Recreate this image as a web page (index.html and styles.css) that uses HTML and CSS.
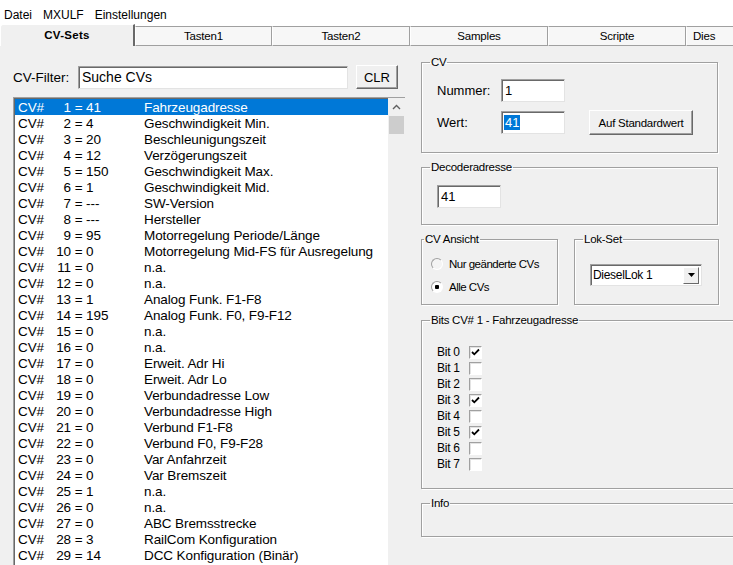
FILE: index.html
```html
<!DOCTYPE html>
<html lang="de">
<head>
  <meta charset="UTF-8">
  <title>MXULF - CV-Sets</title>
  <link rel="stylesheet" href="styles.css">
</head>
<body>
  <div class="window">
    <div class="menubar">
      <span class="menu-item">Datei</span>
      <span class="menu-item">MXULF</span>
      <span class="menu-item">Einstellungen</span>
    </div>

    <div class="tabs">
      <div class="tab active">CV-Sets</div>
      <div class="tab t1">Tasten1</div>
      <div class="tab t2">Tasten2</div>
      <div class="tab t3">Samples</div>
      <div class="tab t4">Scripte</div>
      <div class="tab t5">Dies</div>
    </div>

    <div class="page">
      <div class="left-col">
        <div class="filter-row">
          <label class="filter-label" for="filter">CV-Filter:</label>
          <div class="textbox filter-input" id="filter">Suche CVs</div>
          <div class="btn clr-btn">CLR</div>
        </div>

        <div class="listbox">
          <div class="rows">
            <div class="row selected"><span class="c-cv">CV#</span><span class="c-num">1</span><span class="c-val">&nbsp;= 41</span><span class="c-desc">Fahrzeugadresse</span></div>
            <div class="row"><span class="c-cv">CV#</span><span class="c-num">2</span><span class="c-val">&nbsp;= 4</span><span class="c-desc">Geschwindigkeit Min.</span></div>
            <div class="row"><span class="c-cv">CV#</span><span class="c-num">3</span><span class="c-val">&nbsp;= 20</span><span class="c-desc">Beschleunigungszeit</span></div>
            <div class="row"><span class="c-cv">CV#</span><span class="c-num">4</span><span class="c-val">&nbsp;= 12</span><span class="c-desc">Verzögerungszeit</span></div>
            <div class="row"><span class="c-cv">CV#</span><span class="c-num">5</span><span class="c-val">&nbsp;= 150</span><span class="c-desc">Geschwindigkeit Max.</span></div>
            <div class="row"><span class="c-cv">CV#</span><span class="c-num">6</span><span class="c-val">&nbsp;= 1</span><span class="c-desc">Geschwindigkeit Mid.</span></div>
            <div class="row"><span class="c-cv">CV#</span><span class="c-num">7</span><span class="c-val">&nbsp;= ---</span><span class="c-desc">SW-Version</span></div>
            <div class="row"><span class="c-cv">CV#</span><span class="c-num">8</span><span class="c-val">&nbsp;= ---</span><span class="c-desc">Hersteller</span></div>
            <div class="row"><span class="c-cv">CV#</span><span class="c-num">9</span><span class="c-val">&nbsp;= 95</span><span class="c-desc">Motorregelung Periode/Länge</span></div>
            <div class="row"><span class="c-cv">CV#</span><span class="c-num">10</span><span class="c-val">&nbsp;= 0</span><span class="c-desc">Motorregelung Mid-FS für Ausregelung</span></div>
            <div class="row"><span class="c-cv">CV#</span><span class="c-num">11</span><span class="c-val">&nbsp;= 0</span><span class="c-desc">n.a.</span></div>
            <div class="row"><span class="c-cv">CV#</span><span class="c-num">12</span><span class="c-val">&nbsp;= 0</span><span class="c-desc">n.a.</span></div>
            <div class="row"><span class="c-cv">CV#</span><span class="c-num">13</span><span class="c-val">&nbsp;= 1</span><span class="c-desc">Analog Funk. F1-F8</span></div>
            <div class="row"><span class="c-cv">CV#</span><span class="c-num">14</span><span class="c-val">&nbsp;= 195</span><span class="c-desc">Analog Funk. F0, F9-F12</span></div>
            <div class="row"><span class="c-cv">CV#</span><span class="c-num">15</span><span class="c-val">&nbsp;= 0</span><span class="c-desc">n.a.</span></div>
            <div class="row"><span class="c-cv">CV#</span><span class="c-num">16</span><span class="c-val">&nbsp;= 0</span><span class="c-desc">n.a.</span></div>
            <div class="row"><span class="c-cv">CV#</span><span class="c-num">17</span><span class="c-val">&nbsp;= 0</span><span class="c-desc">Erweit. Adr Hi</span></div>
            <div class="row"><span class="c-cv">CV#</span><span class="c-num">18</span><span class="c-val">&nbsp;= 0</span><span class="c-desc">Erweit. Adr Lo</span></div>
            <div class="row"><span class="c-cv">CV#</span><span class="c-num">19</span><span class="c-val">&nbsp;= 0</span><span class="c-desc">Verbundadresse Low</span></div>
            <div class="row"><span class="c-cv">CV#</span><span class="c-num">20</span><span class="c-val">&nbsp;= 0</span><span class="c-desc">Verbundadresse High</span></div>
            <div class="row"><span class="c-cv">CV#</span><span class="c-num">21</span><span class="c-val">&nbsp;= 0</span><span class="c-desc">Verbund F1-F8</span></div>
            <div class="row"><span class="c-cv">CV#</span><span class="c-num">22</span><span class="c-val">&nbsp;= 0</span><span class="c-desc">Verbund F0, F9-F28</span></div>
            <div class="row"><span class="c-cv">CV#</span><span class="c-num">23</span><span class="c-val">&nbsp;= 0</span><span class="c-desc">Var Anfahrzeit</span></div>
            <div class="row"><span class="c-cv">CV#</span><span class="c-num">24</span><span class="c-val">&nbsp;= 0</span><span class="c-desc">Var Bremszeit</span></div>
            <div class="row"><span class="c-cv">CV#</span><span class="c-num">25</span><span class="c-val">&nbsp;= 1</span><span class="c-desc">n.a.</span></div>
            <div class="row"><span class="c-cv">CV#</span><span class="c-num">26</span><span class="c-val">&nbsp;= 0</span><span class="c-desc">n.a.</span></div>
            <div class="row"><span class="c-cv">CV#</span><span class="c-num">27</span><span class="c-val">&nbsp;= 0</span><span class="c-desc">ABC Bremsstrecke</span></div>
            <div class="row"><span class="c-cv">CV#</span><span class="c-num">28</span><span class="c-val">&nbsp;= 3</span><span class="c-desc">RailCom Konfiguration</span></div>
            <div class="row"><span class="c-cv">CV#</span><span class="c-num">29</span><span class="c-val">&nbsp;= 14</span><span class="c-desc">DCC Konfiguration (Binär)</span></div>
          </div>
          <div class="scrollbar">
            <div class="scroll-arrow">
              <svg width="9" height="6" viewBox="0 0 9 6"><polyline points="1,5 4.5,1.5 8,5" fill="none" stroke="#606060" stroke-width="1.4"/></svg>
            </div>
            <div class="scroll-thumb"></div>
          </div>
        </div>
      </div>

      <div class="right-col">
        <fieldset class="group cv-group">
          <legend>CV</legend>
          <div class="cv-body">
            <div class="cv-fields">
              <div class="field-row">
                <span class="field-label">Nummer:</span>
                <div class="textbox small-input">1</div>
              </div>
              <div class="field-row">
                <span class="field-label">Wert:</span>
                <div class="textbox small-input"><span class="text-sel">41</span></div>
              </div>
            </div>
            <div class="btn std-btn">Auf Standardwert</div>
          </div>
        </fieldset>

        <fieldset class="group decoder-group">
          <legend>Decoderadresse</legend>
          <div class="textbox small-input">41</div>
        </fieldset>

        <div class="pair-row">
          <fieldset class="group ansicht-group">
            <legend>CV Ansicht</legend>
            <div class="radio-row"><span class="radio"></span>Nur geänderte CVs</div>
            <div class="radio-row"><span class="radio checked"></span>Alle CVs</div>
          </fieldset>
          <fieldset class="group lok-group">
            <legend>Lok-Set</legend>
            <div class="combo">
              <span class="combo-text">DieselLok 1</span>
              <span class="combo-btn">
                <svg width="7" height="4" viewBox="0 0 7 4"><polygon points="0,0 7,0 3.5,4" fill="#000"/></svg>
              </span>
            </div>
          </fieldset>
        </div>

        <fieldset class="group bits-group">
          <legend>Bits CV# 1 - Fahrzeugadresse</legend>
          <div class="bit-row"><span class="bit-label">Bit 0</span><span class="check on"><svg width="9" height="8" viewBox="0 0 9 8"><polyline points="1,4 3.3,6.3 8,1.5" fill="none" stroke="#000" stroke-width="1.8"/></svg></span></div>
          <div class="bit-row"><span class="bit-label">Bit 1</span><span class="check"></span></div>
          <div class="bit-row"><span class="bit-label">Bit 2</span><span class="check"></span></div>
          <div class="bit-row"><span class="bit-label">Bit 3</span><span class="check on"><svg width="9" height="8" viewBox="0 0 9 8"><polyline points="1,4 3.3,6.3 8,1.5" fill="none" stroke="#000" stroke-width="1.8"/></svg></span></div>
          <div class="bit-row"><span class="bit-label">Bit 4</span><span class="check"></span></div>
          <div class="bit-row"><span class="bit-label">Bit 5</span><span class="check on"><svg width="9" height="8" viewBox="0 0 9 8"><polyline points="1,4 3.3,6.3 8,1.5" fill="none" stroke="#000" stroke-width="1.8"/></svg></span></div>
          <div class="bit-row"><span class="bit-label">Bit 6</span><span class="check"></span></div>
          <div class="bit-row"><span class="bit-label">Bit 7</span><span class="check"></span></div>
        </fieldset>

        <fieldset class="group info-group">
          <legend>Info</legend>
        </fieldset>
      </div>
    </div>
  </div>
</body>
</html>
```

FILE: styles.css
```css
:root {
  --face: #f0f0f0;
  --shadow: #a0a0a0;
  --dark: #696969;
  --select: #0078d7;
  --ui-font: "Liberation Sans", Arial, sans-serif;
}

body {
  margin: 0;
  padding: 0;
  font-family: var(--ui-font);
  color: #000;
  background: #fff;
}

.window {
  width: 733px;
  height: 565px;
  overflow: hidden;
  display: flex;
  flex-direction: column;
  background: #fff;
}

/* menu */
.menubar {
  height: 24px;
  box-sizing: border-box;
  display: flex;
  align-items: center;
  padding: 6px 0 0 4px;
  font-size: 12px;
  flex-shrink: 0;
}

.menu-item {
  margin-right: 11px;
}

/* tabs */
.tabs {
  height: 22px;
  display: flex;
  align-items: flex-end;
  flex-shrink: 0;
  font-size: 11.5px;
  letter-spacing: -0.2px;
  overflow: hidden;
  white-space: nowrap;
}

.tab {
  height: 18px;
  line-height: 18px;
  text-align: center;
  background: #f7f7f7;
  border-top: 1px solid var(--shadow);
  border-left: 1px solid #fff;
  border-right: 1px solid var(--shadow);
  border-bottom: 1px solid var(--shadow);
  flex-shrink: 0;
}

.tab.active {
  width: 132px;
  height: 21px;
  line-height: 21px;
  border-top: 1px solid #fff;
  border-left: 1px solid #fff;
  border-right: 2px solid var(--dark);
  border-bottom: none;
  border-top-left-radius: 3px;
  background: var(--face);
  font-weight: bold;
  letter-spacing: 0.3px;
}

.tab.t1 { width: 135px; }
.tab.t2 { width: 136px; }
.tab.t3 { width: 136px; }
.tab.t4 { width: 136px; }
.tab.t5 { width: 60px; text-align: left; padding-left: 6px; }

/* page body */
.page {
  flex: 1;
  display: flex;
  background: var(--face);
  min-height: 0;
}

.left-col {
  width: 392px;
  padding: 19px 0 0 13px;
  display: flex;
  flex-direction: column;
  flex-shrink: 0;
}

.filter-row {
  display: flex;
  align-items: center;
  height: 24px;
}

.filter-label {
  width: 65px;
  font-size: 13.5px;
}

.textbox {
  background: #fff;
  border-top: 1px solid var(--shadow);
  border-left: 1px solid var(--shadow);
  border-right: 1px solid #e3e3e3;
  border-bottom: 1px solid #e3e3e3;
  box-shadow: inset 1px 1px 0 var(--dark);
  box-sizing: border-box;
  font-size: 13.5px;
  padding: 3px 0 0 3px;
}

.filter-input {
  width: 270px;
  height: 23px;
  font-size: 14px;
  padding-top: 2px;
}

.btn {
  display: flex;
  align-items: center;
  justify-content: center;
  background: var(--face);
  border-top: 1px solid #fff;
  border-left: 1px solid #fff;
  border-right: 1px solid var(--dark);
  border-bottom: 1px solid var(--dark);
  box-shadow: inset -1px -1px 0 var(--shadow);
  box-sizing: border-box;
}

.clr-btn {
  width: 42px;
  height: 24px;
  margin-left: 8px;
  font-size: 13px;
}

/* list */
.listbox {
  margin-top: 8px;
  flex: 1;
  display: flex;
  background: #fff;
  border-top: 1px solid var(--shadow);
  border-left: 1px solid var(--shadow);
  box-shadow: inset 1px 1px 0 var(--dark);
  overflow: hidden;
  min-height: 0;
}

.rows {
  flex: 1;
  padding: 1px 0 0 1px;
  font-size: 13.5px;
  letter-spacing: -0.1px;
  white-space: nowrap;
  overflow: hidden;
}

.row {
  height: 16px;
  line-height: 17px;
  display: flex;
  padding-left: 3px;
}

.row.selected {
  background: var(--select);
  color: #fff;
}

.c-cv {
  width: 35px;
}

.c-num {
  width: 18px;
  text-align: right;
}

.c-val {
  width: 73px;
}

.c-desc {
  flex: 1;
}

.scrollbar {
  width: 17px;
  background: var(--face);
  flex-shrink: 0;
  display: flex;
  flex-direction: column;
}

.scroll-arrow {
  height: 17px;
  display: flex;
  align-items: center;
  justify-content: center;
}

.scroll-thumb {
  height: 18px;
  margin: 1px 1px 0 1px;
  background: #cdcdcd;
}

/* right column */
.right-col {
  padding: 10px 0 0 16px;
  width: 330px;
  flex-shrink: 0;
  font-size: 11.5px;
  letter-spacing: -0.25px;
}

.group {
  margin: 0;
  padding: 0 0 0 15px;
  border: 1px solid var(--shadow);
  box-shadow: 1px 1px 0 #fff, inset 1px 1px 0 #fff;
  box-sizing: border-box;
  min-width: 0;
}

.group legend {
  padding: 0 1px;
  margin-left: -7px;
  line-height: 12px;
  font-size: 11.5px;
}

.cv-group {
  width: 297px;
  height: 97px;
}

.cv-body {
  display: flex;
  align-items: flex-end;
  padding-top: 11px;
}

.cv-fields {
  display: flex;
  flex-direction: column;
  gap: 9px;
}

.field-row {
  display: flex;
  align-items: center;
}

.field-label {
  width: 64px;
  font-size: 13px;
  letter-spacing: 0;
}

.small-input {
  width: 64px;
  height: 23px;
  font-size: 13px;
  letter-spacing: 0;
}

.text-sel {
  background: var(--select);
  color: #fff;
  padding: 0 1px;
  margin-left: -1px;
}

.std-btn {
  width: 104px;
  height: 25px;
  margin: 0 0 -1px 24px;
  font-size: 11.5px;
}

.decoder-group {
  width: 297px;
  height: 64px;
  margin-top: 8px;
  padding-top: 12px;
}

.pair-row {
  display: flex;
  gap: 16px;
  margin-top: 8px;
}

.ansicht-group {
  width: 137px;
  height: 72px;
  padding: 10px 0 0 9px;
}

.radio-row {
  display: flex;
  align-items: center;
  height: 18px;
  margin-bottom: 5px;
  letter-spacing: -0.5px;
}

.radio {
  width: 12px;
  height: 12px;
  border-radius: 50%;
  box-sizing: border-box;
  border-top: 1px solid var(--shadow);
  border-left: 1px solid var(--shadow);
  border-right: 1px solid #fff;
  border-bottom: 1px solid #fff;
  background: #f4f4f4;
  margin-right: 6px;
}

.radio.checked {
  background: radial-gradient(circle, #000 0 2px, #fff 2.5px);
}

.lok-group {
  width: 145px;
  height: 72px;
  padding: 19px 0 0 15px;
}

.combo {
  width: 112px;
  height: 22px;
  display: flex;
  align-items: center;
  background: #fff;
  border-top: 1px solid var(--shadow);
  border-left: 1px solid var(--shadow);
  border-right: 1px solid #e3e3e3;
  border-bottom: 1px solid #e3e3e3;
  box-shadow: inset 1px 1px 0 var(--dark);
  box-sizing: border-box;
  font-size: 12px;
  letter-spacing: -0.3px;
  padding: 0 2px 0 2px;
}

.combo-text {
  flex: 1;
}

.combo-btn {
  width: 16px;
  height: 17px;
  display: flex;
  align-items: center;
  justify-content: center;
  background: var(--face);
  border-top: 1px solid #fff;
  border-left: 1px solid #fff;
  border-right: 1px solid var(--dark);
  border-bottom: 1px solid var(--dark);
  box-sizing: border-box;
}

.bits-group {
  width: 330px;
  height: 175px;
  margin-top: 9px;
  padding-top: 18px;
}

.bit-row {
  display: flex;
  align-items: center;
  height: 16px;
  font-size: 12px;
}

.bit-label {
  width: 32px;
}

.check {
  width: 13px;
  height: 13px;
  box-sizing: border-box;
  border-top: 1px solid var(--shadow);
  border-left: 1px solid var(--shadow);
  border-right: 1px solid #fff;
  border-bottom: 1px solid #fff;
  box-shadow: inset 1px 1px 0 #e3e3e3;
  background: #fff;
  display: flex;
  align-items: center;
  justify-content: center;
}

.info-group {
  width: 330px;
  height: 40px;
  margin-top: 8px;
}
```
